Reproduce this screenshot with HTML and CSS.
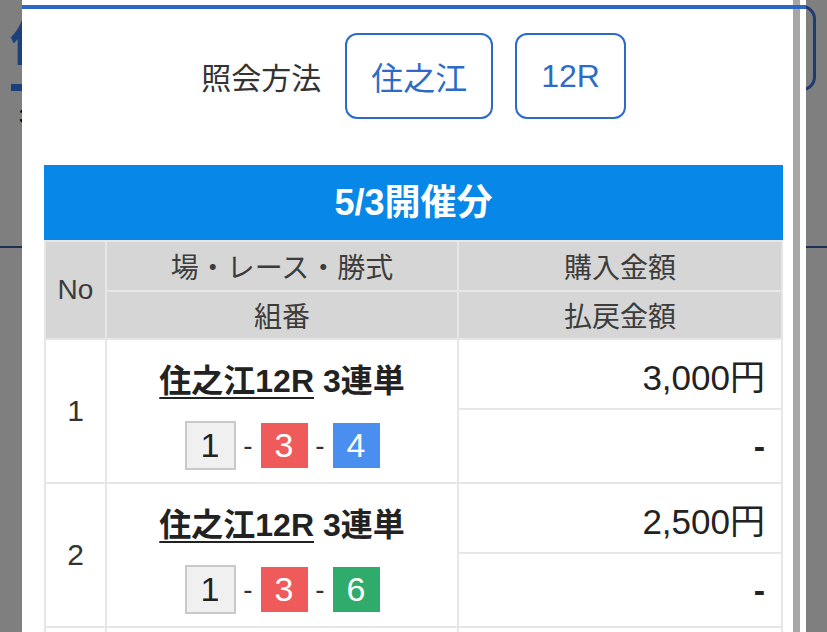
FILE: index.html
```
<!DOCTYPE html>
<html>
<head>
    <meta charset="UTF-8">
    <title>投票照会</title>
    <link rel="stylesheet" href="styles.css">
</head>
<body>
    <div class="page">
        <div class="page-head">
            <div class="page-title">
                <h1>住之江</h1>
                <div class="page-bar"></div>
                <p class="page-sub">3R</p>
            </div>
            <div class="page-btn"></div>
        </div>
    </div>

    <div class="overlay"></div>

    <div class="modal">
        <div class="modal-line"></div>

        <div class="query">
            <span class="query-label">照会方法</span>
            <span class="query-btn">住之江</span>
            <span class="query-btn">12R</span>
        </div>

        <div class="day-head">5/3開催分</div>

        <table class="bets">
            <colgroup>
                <col class="col-no">
                <col class="col-race">
                <col>
            </colgroup>
            <thead>
                <tr class="head-a">
                    <th rowspan="2">No</th>
                    <th>場・レース・勝式</th>
                    <th>購入金額</th>
                </tr>
                <tr class="head-b">
                    <th>組番</th>
                    <th>払戻金額</th>
                </tr>
            </thead>
            <tbody>
                <tr class="row-a">
                    <td class="no" rowspan="2">1</td>
                    <td class="race"><a href="#">住之江12R</a> 3連単</td>
                    <td class="money">3,000円</td>
                </tr>
                <tr class="row-b">
                    <td class="combo">
                        <span class="boat boat-1">1</span><span class="dash">-</span><span class="boat boat-3">3</span><span class="dash">-</span><span class="boat boat-4">4</span>
                    </td>
                    <td class="money pay">-</td>
                </tr>
                <tr class="row-a">
                    <td class="no" rowspan="2">2</td>
                    <td class="race"><a href="#">住之江12R</a> 3連単</td>
                    <td class="money">2,500円</td>
                </tr>
                <tr class="row-b">
                    <td class="combo">
                        <span class="boat boat-1">1</span><span class="dash">-</span><span class="boat boat-3">3</span><span class="dash">-</span><span class="boat boat-6">6</span>
                    </td>
                    <td class="money pay">-</td>
                </tr>
                <!-- next record starts just below the fold -->
                <tr class="row-a">
                    <td class="no" rowspan="2"></td>
                    <td class="race"></td>
                    <td class="money"></td>
                </tr>
                <tr class="row-b">
                    <td class="combo"></td>
                    <td class="money pay"></td>
                </tr>
            </tbody>
        </table>

        <div class="scrollbar"></div>
    </div>
</body>
</html>
```

FILE: styles.css
```
* {
    box-sizing: border-box;
}

body {
    margin: 0;
    font-family: "Liberation Sans", "Noto Sans CJK JP", sans-serif;
    color: #222;
    background: #fff;
    overflow: hidden;
}

/* page behind the dialog */
.page-head {
    display: flex;
    justify-content: space-between;
    align-items: flex-start;
    height: 248px;
    border-bottom: 2px solid #3d62a6;
}

.page-title {
    padding-left: 10px;
}

.page-title h1 {
    margin: 16px 0 0;
    font-size: 48px;
    line-height: 56px;
    color: #3a7ef8;
}

.page-bar {
    width: 90px;
    height: 7px;
    margin: 12px 0 0 1px;
    background: #3a7ef8;
}

.page-sub {
    margin: 14px 0 0 9px;
    font-size: 20px;
    color: #000;
}

.page-btn {
    width: 120px;
    height: 86px;
    margin: 5px 11px 0 0;
    border: 3px solid #3c78e0;
    border-radius: 14px;
}

.overlay {
    position: fixed;
    inset: 0;
    background: rgba(0, 0, 0, 0.5);
}

/* dialog */
.modal {
    position: fixed;
    top: 0;
    bottom: 0;
    left: 22px;
    width: 784px;
    padding: 0 23px 0 22px;
    background: #fff;
    overflow: hidden;
}

.modal-line {
    position: relative;
    z-index: 1;
    height: 4px;
    margin: 5px -23px 0 -22px;
    background: #2e66c6;
}

.scrollbar {
    position: absolute;
    top: 0;
    bottom: 0;
    left: 771px;
    width: 7px;
    background: #a6a6a6;
}

.query {
    display: flex;
    justify-content: center;
    align-items: center;
    gap: 22px;
    margin-top: 24px;
}

.query-label {
    margin-right: 2px;
    font-size: 30px;
    color: #333;
}

.query-btn {
    display: flex;
    align-items: center;
    height: 86px;
    padding: 0 24px;
    border: 2px solid #2d6cc6;
    border-radius: 12px;
    font-size: 32px;
    color: #2d6cc6;
}

.day-head {
    margin-top: 46px;
    height: 75px;
    line-height: 75px;
    background: #0788e8;
    color: #fff;
    font-size: 36px;
    font-weight: bold;
    text-align: center;
}

.bets {
    width: 100%;
    border-collapse: collapse;
}

.col-no {
    width: 61px;
}

.col-race {
    width: 352px;
}

.bets th,
.bets td {
    border: 2px solid #e6e6e6;
    padding: 0;
}

.bets th {
    background: #d6d6d6;
    color: #3c3c3c;
    font-size: 28px;
    font-weight: normal;
}

.head-a th {
    height: 50px;
}

.head-b th {
    height: 48px;
}

.bets td {
    text-align: center;
}

.row-a td {
    height: 70px;
}

.row-b td {
    height: 74px;
}

.bets .race {
    border-bottom: none;
    padding-top: 6px;
    font-size: 32px;
    font-weight: bold;
}

.bets .combo {
    border-top: none;
}

.race a {
    color: #222;
    text-decoration: underline;
    text-underline-offset: 5px;
    text-decoration-thickness: 2px;
}

.bets .no {
    font-size: 30px;
    color: #333;
}

.bets .money {
    text-align: right;
    padding-right: 16px;
    font-size: 35px;
    color: #222;
}

.bets .pay {
    font-weight: bold;
    font-size: 34px;
}

.combo {
    font-size: 0;
}

.boat {
    display: inline-flex;
    align-items: center;
    justify-content: center;
    width: 47px;
    height: 45px;
    vertical-align: middle;
    font-size: 34px;
    color: #fff;
    box-sizing: content-box;
}

.boat-1 {
    background: #f0f0f0;
    border: 2px solid #c9c9c9;
    color: #222;
}

.boat-3 {
    background: #ef5b5b;
}

.boat-4 {
    background: #4a8ff0;
}

.boat-6 {
    background: #2fac6b;
}

.dash {
    display: inline-block;
    width: 25px;
    vertical-align: middle;
    font-size: 28px;
    color: #333;
}
```
